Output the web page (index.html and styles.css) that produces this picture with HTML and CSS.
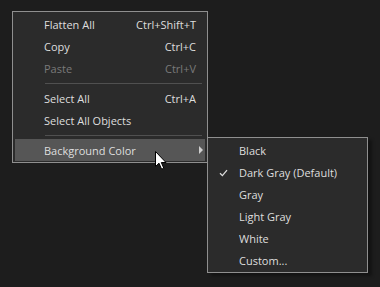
FILE: index.html
```html
<!DOCTYPE html>
<html>
<head>
<meta charset="utf-8">
<link rel="stylesheet" href="styles.css">
</head>
<body>
<div class="menu main">
  <div class="item"><span class="label">Flatten All</span><span class="key">Ctrl+Shift+T</span></div>
  <div class="item"><span class="label">Copy</span><span class="key">Ctrl+C</span></div>
  <div class="item disabled"><span class="label">Paste</span><span class="key">Ctrl+V</span></div>
  <div class="sep"></div>
  <div class="item"><span class="label">Select All</span><span class="key">Ctrl+A</span></div>
  <div class="item"><span class="label">Select All Objects</span></div>
  <div class="sep"></div>
  <div class="item active"><span class="label">Background Color</span><span class="arrow"></span></div>
</div>
<div class="menu sub">
  <div class="item"><span class="label">Black</span></div>
  <div class="item checked"><svg class="check" width="9" height="8" viewBox="0 0 9 8"><path d="M1 4.2 L3.4 6.6 L8 1.2" fill="none" stroke="#dcdcdc" stroke-width="1.3"/></svg><span class="label">Dark Gray (Default)</span></div>
  <div class="item"><span class="label">Gray</span></div>
  <div class="item"><span class="label">Light Gray</span></div>
  <div class="item"><span class="label">White</span></div>
  <div class="item"><span class="label">Custom...</span></div>
</div>
<svg class="cursor" width="13" height="20" viewBox="0 0 13 20"><path d="M0.5 0.5 L0.5 15.5 L4 12.2 L6.6 18.2 L8.8 17.2 L6.3 11.5 L11 11.5 Z" fill="#fff" stroke="#000" stroke-width="1"/></svg>
</body>
</html>
```
FILE: styles.css
```css
html, body {
  margin: 0;
  padding: 0;
  background: #1d1d1d;
  width: 380px;
  height: 287px;
  overflow: hidden;
}
body {
  font-family: "Open Sans", "Noto Sans", sans-serif;
  font-size: 11px;
  color: #dedede;
  position: relative;
}
.menu {
  position: absolute;
  box-sizing: border-box;
  background: #2b2b2b;
  border: 1px solid #8f8f8f;
  padding: 1px 2px;
  display: flex;
  flex-direction: column;
}
.main {
  left: 12px;
  top: 11px;
  width: 196px;
}
.sub {
  left: 207px;
  top: 137px;
  width: 161px;
  box-shadow: 4px 3px 3px rgba(0,0,0,0.35);
}
.item {
  height: 22px;
  display: flex;
  align-items: center;
  padding: 0 9px 0 29px;
  position: relative;
  white-space: nowrap;
}
.item .label {
  flex: 1;
}
.item .key {
  text-align: right;
}
.disabled {
  color: #7a7a7a;
}
.active {
  background: #565656;
}
.arrow {
  width: 0;
  height: 0;
  border-left: 4px solid #cfcfcf;
  border-top: 4px solid transparent;
  border-bottom: 4px solid transparent;
  margin-right: -7px;
}
.sep {
  height: 1px;
  background: #505050;
  margin: 4px 3px 3px 30px;
}
.check {
  position: absolute;
  left: 9px;
  top: 8px;
}
.cursor {
  position: absolute;
  left: 155px;
  top: 151px;
}
```
